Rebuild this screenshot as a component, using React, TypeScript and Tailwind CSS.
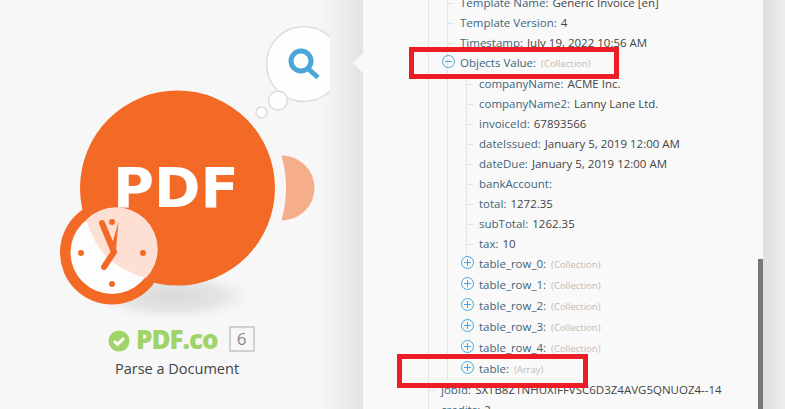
import React from "react";

function Label({ k, v, note }: { k: string; v?: string; note?: string }) {
  return (
    <span className="flex items-baseline gap-[4px] whitespace-nowrap">
      <span className="text-[#3f6478]">{k}:</span>
      {v && <span className="text-[#444]">{v}</span>}
      {note && <span className="ml-[1px] text-[9.5px] text-[#bbb]">({note})</span>}
    </span>
  );
}

function Toggle({ minus }: { minus?: boolean }) {
  return (
    <svg width="13" height="13" viewBox="0 0 13 13" className="absolute left-[-18px] top-[2px]">
      <circle cx="6.500" cy="6.500" r="6" fill="none" stroke="#4aa5d8" strokeWidth="1" />
      <path d={minus ? "M3 6.500h7" : "M3 6.500h7M6.500 3v7"} stroke="#4aa5d8" strokeWidth="1" fill="none" />
    </svg>
  );
}

function Leaf({ k, v }: { k: string; v?: string }) {
  return (
    <div className="relative flex h-5 items-center pl-[12px]">
      <span className="absolute left-0 top-1/2 h-px w-[6px] bg-[#e2e2e2]" />
      <Label k={k} v={v} />
    </div>
  );
}

function Branch({ k, note, minus }: { k: string; note: string; minus?: boolean }) {
  return (
    <div className="relative ml-[12px] flex h-[21px] items-center">
      <Toggle minus={minus} />
      <Label k={k} note={note} />
    </div>
  );
}

function Tree() {
  return (
    <div className="mt-[-7px] ml-[65px] border-l border-[#e4e4e4] pl-[13px] text-[11.5px] leading-5">
      <div className="ml-[5px]">
        <div className="border-l border-[#e4e4e4]">
          <Leaf k="Template Name" v="Generic Invoice [en]" />
          <Leaf k="Template Version" v="4" />
          <Leaf k="Timestamp" v="July 19, 2022 10:56 AM" />
          <Branch k="Objects Value" note="Collection" minus />
          <div className="ml-[18px] border-l border-[#e4e4e4]">
            <Leaf k="companyName" v="ACME Inc." />
            <Leaf k="companyName2" v="Lanny Lane Ltd." />
            <Leaf k="invoiceId" v="67893566" />
            <Leaf k="dateIssued" v="January 5, 2019 12:00 AM" />
            <Leaf k="dateDue" v="January 5, 2019 12:00 AM" />
            <Leaf k="bankAccount" />
            <Leaf k="total" v="1272.35" />
            <Leaf k="subTotal" v="1262.35" />
            <Leaf k="tax" v="10" />
          </div>
          <div className="ml-[19px]">
            <Branch k="table_row_0" note="Collection" />
            <Branch k="table_row_1" note="Collection" />
            <Branch k="table_row_2" note="Collection" />
            <Branch k="table_row_3" note="Collection" />
            <Branch k="table_row_4" note="Collection" />
            <Branch k="table" note="Array" />
          </div>
        </div>
      </div>
      <div className="-ml-[13px]">
        <Leaf k="jobId" v="SXTB8Z1NHUXIFFVSC6D3Z4AVG5QNUOZ4--14" />
        <Leaf k="credits" v="2" />
      </div>
    </div>
  );
}

function Module() {
  return (
    <svg width="330" height="322" viewBox="0 0 330 322" className="block">
      <defs>
        <radialGradient id="sh">
          <stop offset="0" stopColor="#d8d8d8" />
          <stop offset="0.55" stopColor="#e6e6e6" />
          <stop offset="1" stopColor="#f7f7f7" stopOpacity="0" />
        </radialGradient>
      </defs>
      <ellipse cx="172" cy="296" rx="92" ry="27" fill="url(#sh)" />
      <path d="M281.500 155.500A33 32.500 0 0 1 281.500 220.500A120 120 0 0 0 281.500 155.500Z" fill="#f6ad8c" />
      <circle cx="177.500" cy="188" r="97.500" fill="#f36926" />
      <circle cx="112" cy="252.500" r="52" fill="#f36926" />
      <circle cx="112" cy="252.500" r="41.500" fill="#fdfdfd" />
      <path d="M86 220C93 240 102 255 114 263C124 270 135 275 146 278A41.500 41.500 0 0 0 86 220Z" fill="#fddfd3" />
      <g fill="#f36926">
        <circle cx="112" cy="222" r="3" />
        <circle cx="112" cy="284" r="3" />
        <circle cx="81" cy="253" r="3" />
        <circle cx="143" cy="253" r="3" />
      </g>
      <path d="M102 223L114 252L104 267" fill="none" stroke="#f36926" strokeWidth="6" strokeLinecap="round" strokeLinejoin="round" />
      <path d="M118.500 222L116 250L111.500 246Z" fill="#f36926" />
      <circle cx="304" cy="64" r="37.500" fill="#fefefe" stroke="#dcdcdc" strokeWidth="1.500" />
      <circle cx="278" cy="100.500" r="9.500" fill="#fefefe" stroke="#dcdcdc" strokeWidth="1.500" />
      <circle cx="261.500" cy="112.500" r="5.500" fill="#fefefe" stroke="#dcdcdc" strokeWidth="1.500" />
      <circle cx="301" cy="61" r="10" fill="none" stroke="#4aa5d8" strokeWidth="5" />
      <path d="M308.500 69L318 77.500" stroke="#4aa5d8" strokeWidth="5" fill="none" />
    </svg>
  );
}

export default function App() {
  return (
    <div
      className="relative flex h-[409px] w-[785px] overflow-hidden bg-[#f7f7f7] bg-[linear-gradient(90deg,#f7f7f7_0,#f7f7f7_320px,#e3e3e3_363px,#dedede_763px,#eeeeee_785px)]"
      style={{ fontFamily: '"Open Sans", "Noto Sans", sans-serif' }}
    >
      <div className="relative w-[363px] shrink-0">
        <Module />
        <div
          className="absolute left-[113px] top-[155px] text-[56px] font-bold leading-[66px] text-white"
          style={{ fontFamily: '"DejaVu Sans", sans-serif' }}
        >
          PDF
        </div>
        <div className="absolute right-0 top-[53px] h-0 w-0 border-y-[10px] border-r-[10px] border-y-transparent border-r-[#f9f9f9]" />
        <div className="mt-[3px] flex items-center pl-[108px]">
          <svg width="22" height="22" viewBox="0 0 22 22" className="mt-[4px]">
            <circle cx="11" cy="11" r="10.500" fill="#a0d468" />
            <path d="M6 11l3.500 3.500L16 8" fill="none" stroke="#fff" strokeWidth="3" />
          </svg>
          <span className="ml-[6px] text-[26px] font-extrabold leading-[28px] tracking-[-1px] text-[#a0d468]">PDF.co</span>
          <span className="ml-[11px] flex h-[26px] w-[26px] items-center justify-center border-2 border-[#d0d0d0] text-[17px] text-[#888]">6</span>
        </div>
        <div className="mt-[6px] pl-[115px] text-[14.5px] leading-5 text-[#444]">Parse a Document</div>
      </div>
      <div className="relative h-full w-[400px] shrink-0 overflow-hidden bg-[#f9f9f9]">
        <Tree />
        <div className="absolute right-0 top-[259px] h-[150px] w-[5px] bg-[#777]" />
      </div>
      <div className="pointer-events-none absolute left-[409px] top-[47px] h-[32px] w-[210px] border-[5px] border-[#ee1c25]" />
      <div className="pointer-events-none absolute left-[397px] top-[354px] h-[34px] w-[191px] border-[5px] border-[#ee1c25]" />
    </div>
  );
}
